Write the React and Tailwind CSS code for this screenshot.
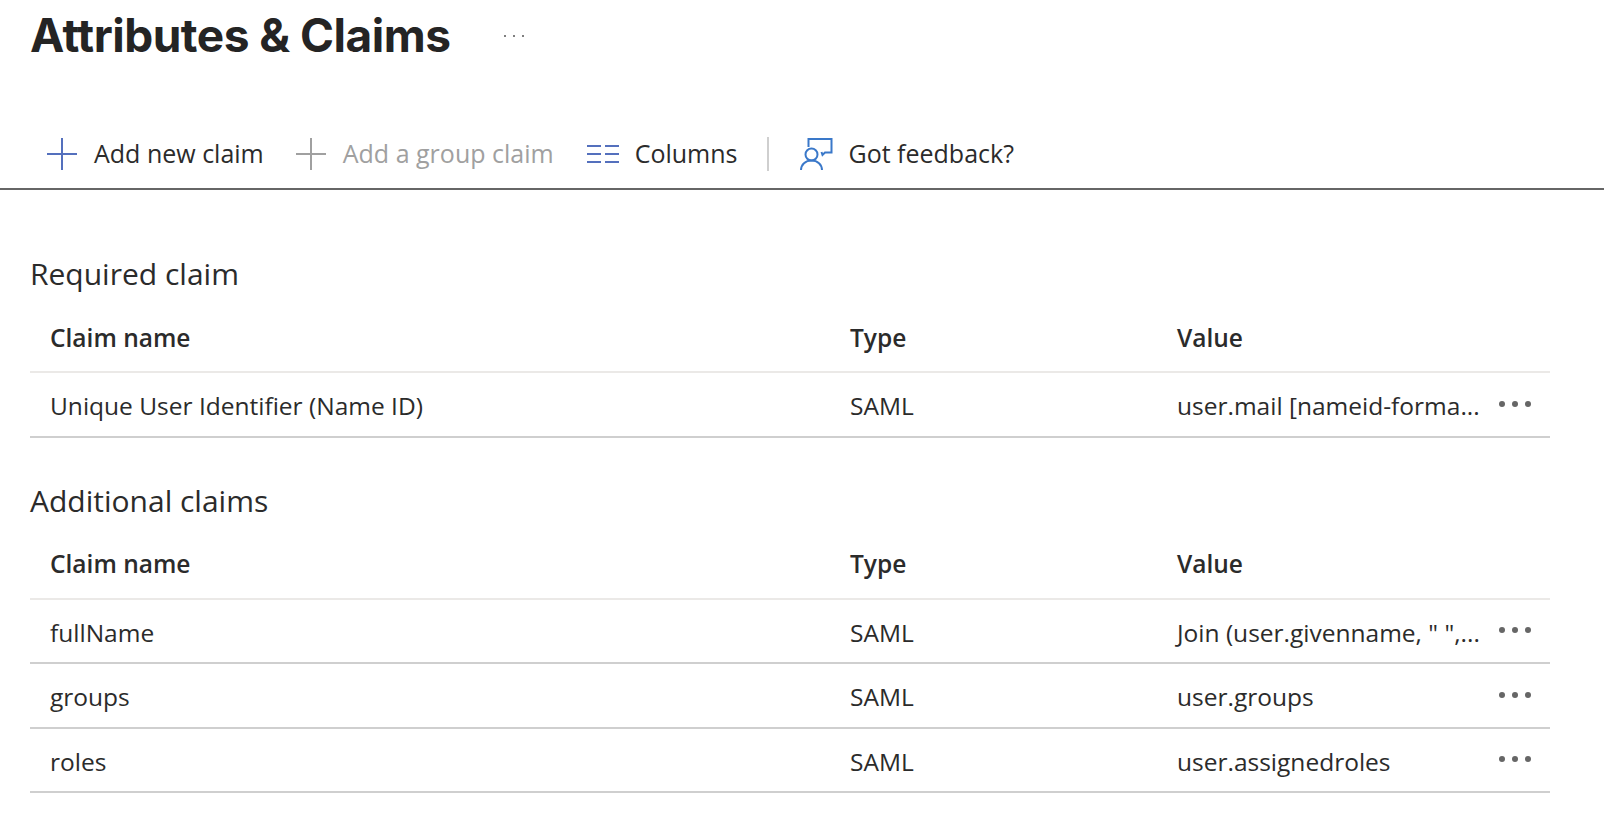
import React from 'react';

const PlusIcon = ({ color }) => (
  <svg width="30" height="32" viewBox="0 0 30 32" fill="none" stroke={color} strokeWidth="2">
    <path d="M15 0v32M0 16h30" />
  </svg>
);

const ColumnsIcon = () => (
  <svg width="34" height="20" viewBox="0 0 34 20" fill="none" stroke="#5470bd" strokeWidth="2">
    <path d="M1 2h14M1 10h14M1 18h14M19 2h14M19 10h14M19 18h14" />
  </svg>
);

const FeedbackIcon = () => (
  <svg width="33" height="32" viewBox="0 0 33 32" fill="none" stroke="#3a78c9" strokeWidth="2">
    <path d="M8.500 9V1h23v13.500h-6.500l-2.500 2.500-1-3" />
    <circle cx="11.500" cy="16.500" r="6" />
    <path d="M1 32c0-5.500 4.500-9.500 10.500-9.500S22 26.500 22 32" />
  </svg>
);

const Dots = () => (
  <div className="flex gap-[7px]">
    <span className="h-[6px] w-[6px] rounded-full bg-[#666666]" />
    <span className="h-[6px] w-[6px] rounded-full bg-[#666666]" />
    <span className="h-[6px] w-[6px] rounded-full bg-[#666666]" />
  </div>
);

const ClaimRow = ({ name, value }) => (
  <div className="grid h-[64.5px] grid-cols-[800px_327px_1fr] items-center border-b-2 border-[#cfcfcf] pl-5 pr-[19px] pt-[5px] text-[24.5px] text-[#2b2b2b]">
    <div>{name}</div>
    <div>SAML</div>
    <div className="flex items-center justify-between">
      <span className="whitespace-nowrap">{value}</span>
      <div className="-translate-y-[3px]">
        <Dots />
      </div>
    </div>
  </div>
);

const ClaimTable = ({ title, rows }) => (
  <section>
    <h2 className="h-[40px] text-[30px] leading-[40px] text-[#2b2b2b]">{title}</h2>
    <div className="mt-[11px] grid h-[68px] grid-cols-[800px_327px_1fr] items-center border-b-2 border-[#ebe9e7] pl-5 text-[24.5px] font-semibold text-[#2b2b2b]">
      <div>Claim name</div>
      <div>Type</div>
      <div>Value</div>
    </div>
    {rows.map((row) => (
      <ClaimRow key={row.name} name={row.name} value={row.value} />
    ))}
  </section>
);

export default function App() {
  return (
    <div className="h-[828px] w-[1604px] overflow-hidden bg-white font-['Open_Sans',sans-serif]">
      <header className="flex h-[70px] items-center px-[30px]">
        <h1 className="font-['Inter',sans-serif] text-[46px] font-bold tracking-[-0.5px] text-[#242424]">
          Attributes &amp; Claims
        </h1>
        <span className="ml-[53px] mt-[2px] flex gap-[7px]">
          <span className="h-[2px] w-[2px] rounded-full bg-[#555555]" />
          <span className="h-[2px] w-[2px] rounded-full bg-[#555555]" />
          <span className="h-[2px] w-[2px] rounded-full bg-[#555555]" />
        </span>
      </header>

      <div className="mt-[50px] flex h-[70px] items-center border-b-2 border-[#666666] pl-[47px] text-[25px] text-[#2b2b2b]">
        <div className="flex items-center gap-[17px]">
          <PlusIcon color="#5470bd" />
          <span>Add new claim</span>
        </div>
        <div className="ml-[32px] flex items-center gap-[17px] text-[#a0a0a0]">
          <PlusIcon color="#a0a0a0" />
          <span>Add a group claim</span>
        </div>
        <div className="ml-[32px] flex items-center gap-[15px]">
          <ColumnsIcon />
          <span>Columns</span>
        </div>
        <div className="ml-[30px] mr-[31px] h-[34px] w-[2px] bg-[#cfcfcf]" />
        <div className="flex items-center gap-[15px]">
          <FeedbackIcon />
          <span>Got feedback?</span>
        </div>
      </div>

      <main className="w-[1550px] pl-[30px] pt-[64px]">
        <ClaimTable
          title="Required claim"
          rows={[{ name: 'Unique User Identifier (Name ID)', value: 'user.mail [nameid-forma...' }]}
        />
        <div className="mt-[43px]">
          <ClaimTable
            title="Additional claims"
            rows={[
              { name: 'fullName', value: 'Join (user.givenname, " ",...' },
              { name: 'groups', value: 'user.groups' },
              { name: 'roles', value: 'user.assignedroles' },
            ]}
          />
        </div>
      </main>
    </div>
  );
}
